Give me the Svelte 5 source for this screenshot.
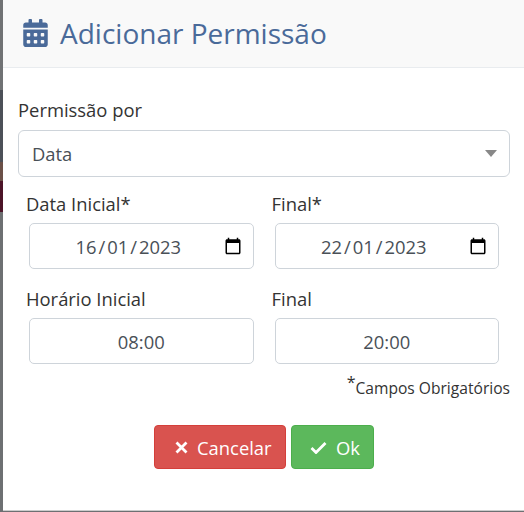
<script lang="ts">
    let permissao = "Data";
    const linhas = [
        [
            { label: "Data Inicial*", valor: "16/01/2023", calendario: true },
            { label: "Final*", valor: "22/01/2023", calendario: true },
        ],
        [
            { label: "Horário Inicial", valor: "08:00", calendario: false },
            { label: "Final", valor: "20:00", calendario: false },
        ],
    ];
</script>

<div class="backdrop">
    <div class="modal">
        <header class="modal-header">
            <svg class="title-icon" viewBox="0 0 448 512" aria-hidden="true">
                <path
                    d="M0 464c0 26.500 21.500 48 48 48h352c26.500 0 48-21.500 48-48V192H0v272zm320-196c0-6.600 5.400-12 12-12h40c6.600 0 12 5.400 12 12v40c0 6.600-5.400 12-12 12h-40c-6.600 0-12-5.400-12-12v-40zm0 128c0-6.600 5.400-12 12-12h40c6.600 0 12 5.400 12 12v40c0 6.600-5.400 12-12 12h-40c-6.600 0-12-5.400-12-12v-40zM192 268c0-6.600 5.400-12 12-12h40c6.600 0 12 5.400 12 12v40c0 6.600-5.400 12-12 12h-40c-6.600 0-12-5.400-12-12v-40zm0 128c0-6.600 5.400-12 12-12h40c6.600 0 12 5.400 12 12v40c0 6.600-5.400 12-12 12h-40c-6.600 0-12-5.400-12-12v-40zM64 268c0-6.600 5.400-12 12-12h40c6.600 0 12 5.400 12 12v40c0 6.600-5.400 12-12 12H76c-6.600 0-12-5.400-12-12v-40zm0 128c0-6.600 5.400-12 12-12h40c6.600 0 12 5.400 12 12v40c0 6.600-5.400 12-12 12H76c-6.600 0-12-5.400-12-12v-40zM400 64h-48V16c0-8.800-7.200-16-16-16h-32c-8.800 0-16 7.200-16 16v48H160V16c0-8.800-7.200-16-16-16h-32c-8.800 0-16 7.200-16 16v48H48C21.500 64 0 85.500 0 112v48h448v-48c0-26.500-21.500-48-48-48z"
                />
            </svg>
            <h4>Adicionar Permissão</h4>
        </header>

        <div class="modal-body">
            <label class="select-label" for="permissao">Permissão por</label>
            <div class="select" id="permissao">
                <span>{permissao}</span>
                <i class="caret"></i>
            </div>

            {#each linhas as linha}
                <div class="row">
                    {#each linha as campo}
                        <div class="col">
                            <span class="label">{campo.label}</span>
                            <div class="input" class:has-picker={campo.calendario}>
                                <span class="valor">
                                    {#each campo.valor.split("/") as parte, i}
                                        {#if i > 0}<span class="slash">/</span>{/if}{parte}
                                    {/each}
                                </span>
                                {#if campo.calendario}
                                    <svg class="picker" viewBox="0 0 24 24" aria-hidden="true">
                                        <path
                                            d="M20 3h-1V1h-2v2H7V1H5v2H4c-1.100 0-2 .9-2 2v16c0 1.100.9 2 2 2h16c1.100 0 2-.9 2-2V5c0-1.100-.9-2-2-2zm0 18H4V8h16v13z"
                                        />
                                    </svg>
                                {/if}
                            </div>
                        </div>
                    {/each}
                </div>
            {/each}

            <p class="required"><sup>*</sup>Campos Obrigatórios</p>

            <div class="actions">
                <button class="btn danger">
                    <svg viewBox="0 0 13 13" aria-hidden="true">
                        <path d="M1.500 1.500l10 10M11.500 1.500l-10 10" />
                    </svg>
                    Cancelar
                </button>
                <button class="btn success">
                    <svg viewBox="0 0 17 13" aria-hidden="true">
                        <path d="M1.500 7l4.500 4.500 9.500-9.500" />
                    </svg>
                    Ok
                </button>
            </div>
        </div>
    </div>
</div>

<style>
    :global(body) {
        margin: 0;
        background: #fff;
    }

    .backdrop {
        width: 524px;
        height: 512px;
        box-sizing: border-box;
        padding-left: 3px;
        background: linear-gradient(
            #707274 0 90px,
            #4c5058 90px 162px,
            #6b5048 162px 181px,
            #4c1428 181px 212px,
            #6d7072 212px
        );
        font-family: "Open Sans", sans-serif;
        color: #333;
        overflow: hidden;
    }

    .modal {
        height: 511px;
        background: #fff;
        border-bottom: 1px solid #ccc;
        box-sizing: border-box;
    }

    .modal-header {
        height: 68px;
        box-sizing: border-box;
        display: flex;
        align-items: center;
        gap: 12px;
        padding: 0 0 2px 20px;
        background: #f9f9f9;
        border-bottom: 1px solid #e9ecef;
    }

    .title-icon {
        width: 25px;
        height: 28px;
        fill: #4a6a99;
    }

    h4 {
        margin: 0;
        font-size: 28px;
        font-weight: 400;
        color: #4a6a99;
    }

    .modal-body {
        padding: 28px 14px 0 15px;
    }

    .select-label {
        display: block;
        font-size: 18.4px;
        line-height: 28px;
        margin-bottom: 6px;
    }

    .select {
        height: 47px;
        box-sizing: border-box;
        display: flex;
        align-items: center;
        justify-content: space-between;
        padding: 0 12px 0 13px;
        border: 1px solid #ced4da;
        border-radius: 6px;
        font-size: 18.4px;
        color: #495057;
    }

    .caret {
        border-left: 6px solid transparent;
        border-right: 6px solid transparent;
        border-top: 7px solid #888;
    }

    .row {
        display: flex;
        gap: 21px;
        padding: 0 11px;
        margin-top: 13px;
    }

    .row + .row {
        margin-top: 16px;
    }

    .col {
        flex: 1;
        min-width: 0;
    }

    .label {
        display: block;
        margin-left: -3px;
        font-size: 18.4px;
        line-height: 28px;
        margin-bottom: 5px;
    }

    .input {
        height: 46px;
        box-sizing: border-box;
        position: relative;
        display: flex;
        align-items: center;
        justify-content: center;
        border: 1px solid #ced4da;
        border-radius: 5px;
        font-size: 18.4px;
        color: #495057;
    }

    .has-picker {
        padding-right: 26px;
    }

    .slash {
        margin: 0 2px;
    }

    .picker {
        position: absolute;
        right: 11px;
        top: 13px;
        width: 18px;
        height: 18px;
        fill: #000;
    }

    .required {
        margin: 12px 0 0;
        text-align: right;
        font-size: 15.6px;
        line-height: 24px;
    }

    .required sup {
        font-size: 16px;
        line-height: 0;
    }

    .actions {
        display: flex;
        justify-content: center;
        gap: 5px;
        margin-top: 25px;
    }

    .btn {
        height: 44px;
        display: flex;
        align-items: center;
        gap: 9px;
        border-radius: 4px;
        font: 400 18.4px "Open Sans", sans-serif;
        color: #fff;
        cursor: pointer;
    }

    .btn svg {
        height: 13px;
        fill: none;
        stroke: #fff;
        stroke-width: 2.8;
    }

    .danger {
        width: 132px;
        padding: 0 0 0 20px;
        background: #d9534f;
        border: 1px solid #d43f3a;
    }

    .danger svg {
        width: 13px;
    }

    .success {
        width: 83px;
        padding: 0 0 0 18px;
        background: #5cb85c;
        border: 1px solid #4cae4c;
    }

    .success svg {
        width: 17px;
    }
</style>
